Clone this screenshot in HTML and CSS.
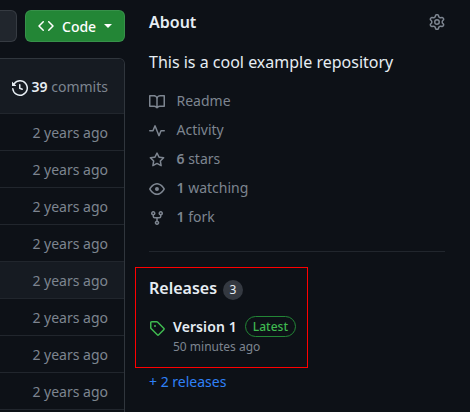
FILE: index.html
```html
<!DOCTYPE html>
<html lang="en">
<head>
<meta charset="utf-8">
<title>Repository</title>
<link rel="stylesheet" href="styles.css">
</head>
<body>
<div class="page">
  <main class="files">
    <div class="toolbar">
      <div class="btn btn-secondary"></div>
      <div class="btn btn-primary">
        <svg class="icon" viewBox="0 0 16 16"><path d="m11.28 3.22 4.25 4.25a.75.75 0 0 1 0 1.06l-4.25 4.25a.749.749 0 0 1-1.275-.326.749.749 0 0 1 .215-.734L13.94 8l-3.72-3.72a.749.749 0 0 1 .326-1.275.749.749 0 0 1 .734.215Zm-6.56 0a.751.751 0 0 1 1.042.018.751.751 0 0 1 .018 1.042L2.06 8l3.72 3.72a.749.749 0 0 1-.326 1.275.749.749 0 0 1-.734-.215L.47 8.53a.75.75 0 0 1 0-1.06Z"/></svg>
        <span>Code</span>
        <span class="caret"></span>
      </div>
    </div>
    <div class="table">
      <div class="table-head">
        <svg class="icon" viewBox="0 0 16 16"><path d="m.427 1.927 1.215 1.215a8.002 8.002 0 1 1-1.6 5.685.75.75 0 1 1 1.493-.154 6.5 6.5 0 1 0 1.18-4.458l1.358 1.358A.25.25 0 0 1 3.896 6H.25A.25.25 0 0 1 0 5.75V2.104a.25.25 0 0 1 .427-.177ZM7.75 4a.75.75 0 0 1 .75.75v2.992l2.028.812a.75.75 0 0 1-.557 1.392l-2.5-1A.751.751 0 0 1 7 8.25v-3.5A.75.75 0 0 1 7.75 4Z"/></svg>
        <span><strong>39</strong> commits</span>
      </div>
      <div class="row">2 years ago</div>
      <div class="row">2 years ago</div>
      <div class="row">2 years ago</div>
      <div class="row">2 years ago</div>
      <div class="row row-active">2 years ago</div>
      <div class="row">2 years ago</div>
      <div class="row">2 years ago</div>
      <div class="row">2 years ago</div>
      <div class="row"></div>
    </div>
  </main>
  <aside class="sidebar">
    <div class="about-head">
      <h2>About</h2>
      <svg class="icon" viewBox="0 0 16 16"><path d="M8 0a8.2 8.2 0 0 1 .701.031C9.444.095 9.99.645 10.16 1.29l.288 1.107c.018.066.079.158.212.224.231.114.454.243.668.386.123.082.233.09.299.071l1.103-.303c.644-.176 1.392.021 1.82.63.27.385.506.792.704 1.218.315.675.111 1.422-.364 1.891l-.814.806c-.049.048-.098.147-.088.294.016.257.016.515 0 .772-.01.147.038.246.088.294l.814.806c.475.469.679 1.216.364 1.891a7.977 7.977 0 0 1-.704 1.217c-.428.61-1.176.807-1.82.63l-1.102-.302c-.067-.019-.177-.011-.3.071a5.909 5.909 0 0 1-.668.386c-.133.066-.194.158-.211.224l-.29 1.106c-.168.646-.715 1.196-1.458 1.26a8.006 8.006 0 0 1-1.402 0c-.743-.064-1.289-.614-1.458-1.26l-.289-1.106c-.018-.066-.079-.158-.212-.224a5.738 5.738 0 0 1-.668-.386c-.123-.082-.233-.09-.299-.071l-1.103.303c-.644.176-1.392-.021-1.82-.63a8.12 8.12 0 0 1-.704-1.218c-.315-.675-.111-1.422.363-1.891l.815-.806c.05-.048.098-.147.088-.294a6.214 6.214 0 0 1 0-.772c.01-.147-.038-.246-.088-.294l-.815-.806C.635 6.045.431 5.298.746 4.623a7.92 7.92 0 0 1 .704-1.217c.428-.61 1.176-.807 1.82-.63l1.102.302c.067.019.177.011.3-.071.214-.143.437-.272.668-.386.133-.066.194-.158.211-.224l.29-1.106C6.009.645 6.556.095 7.299.03 7.53.01 7.764 0 8 0Zm-.571 1.525c-.036.003-.108.036-.137.146l-.289 1.105c-.147.561-.549.967-.998 1.189-.173.086-.34.183-.5.29-.417.278-.97.423-1.529.27l-1.103-.303c-.109-.03-.175.016-.195.045-.22.312-.412.644-.573.99-.014.031-.021.11.059.19l.815.806c.411.406.562.957.53 1.456a4.709 4.709 0 0 0 0 .582c.032.499-.119 1.05-.53 1.456l-.815.806c-.081.08-.073.159-.059.19.162.346.353.677.573.989.02.03.085.076.195.046l1.102-.303c.56-.153 1.113-.008 1.53.27.161.107.328.204.501.29.447.222.85.629.997 1.189l.289 1.105c.029.109.101.143.137.146a6.6 6.6 0 0 0 1.142 0c.036-.003.108-.036.137-.146l.289-1.105c.147-.561.549-.967.998-1.189.173-.086.34-.183.5-.29.417-.278.97-.423 1.529-.27l1.103.303c.109.029.175-.016.195-.045.22-.313.411-.644.573-.99.014-.031.021-.11-.059-.19l-.815-.806c-.411-.406-.562-.957-.53-1.456a4.709 4.709 0 0 0 0-.582c-.032-.499.119-1.05.53-1.456l.815-.806c.081-.08.073-.159.059-.19a6.464 6.464 0 0 0-.573-.989c-.02-.03-.085-.076-.195-.046l-1.102.303c-.56.153-1.113.008-1.53-.27a4.44 4.44 0 0 0-.501-.29c-.447-.222-.85-.629-.997-1.189l-.289-1.105c-.029-.11-.101-.143-.137-.146a6.6 6.6 0 0 0-1.142 0ZM11 8a3 3 0 1 1-6 0 3 3 0 0 1 6 0ZM9.5 8a1.5 1.5 0 1 0-3.001.001A1.5 1.5 0 0 0 9.5 8Z"/></svg>
    </div>
    <p class="description">This is a cool example repository</p>
    <ul class="stats">
      <li><svg class="icon" viewBox="0 0 16 16"><path d="M0 1.75A.75.75 0 0 1 .75 1h4.253c1.227 0 2.317.59 3 1.501A3.743 3.743 0 0 1 11.006 1h4.245a.75.75 0 0 1 .75.75v10.5a.75.75 0 0 1-.75.75h-4.507a2.25 2.25 0 0 0-1.591.659l-.622.621a.75.75 0 0 1-1.06 0l-.622-.621A2.25 2.25 0 0 0 5.258 13H.75a.75.75 0 0 1-.75-.75Zm7.251 10.324.004-5.073-.002-2.253A2.25 2.25 0 0 0 5.003 2.5H1.5v9h3.757a3.75 3.75 0 0 1 1.994.574ZM8.755 4.75l-.004 7.322a3.752 3.752 0 0 1 1.992-.572H14.5v-9h-3.495a2.25 2.25 0 0 0-2.25 2.25Z"/></svg><span>Readme</span></li>
      <li><svg class="icon" viewBox="0 0 16 16"><path d="M6 2c.306 0 .582.187.696.471L10 10.731l1.304-3.26A.751.751 0 0 1 12 7h3.25a.75.75 0 0 1 0 1.5h-2.742l-1.812 4.528a.751.751 0 0 1-1.392 0L6 4.77 4.696 8.03A.75.75 0 0 1 4 8.5H.75a.75.75 0 0 1 0-1.5h2.742l1.812-4.529A.751.751 0 0 1 6 2Z"/></svg><span>Activity</span></li>
      <li><svg class="icon" viewBox="0 0 16 16"><path d="M8 .25a.75.75 0 0 1 .673.418l1.882 3.815 4.21.612a.75.75 0 0 1 .416 1.279l-3.046 2.97.719 4.192a.751.751 0 0 1-1.088.791L8 12.347l-3.766 1.98a.75.75 0 0 1-1.088-.79l.72-4.194L.818 6.374a.75.75 0 0 1 .416-1.28l4.21-.611L7.327.668A.75.75 0 0 1 8 .25Zm0 2.445L6.615 5.5a.75.75 0 0 1-.564.41l-3.097.45 2.24 2.184a.75.75 0 0 1 .216.664l-.528 3.084 2.769-1.456a.75.75 0 0 1 .698 0l2.77 1.456-.53-3.084a.75.75 0 0 1 .216-.664l2.24-2.183-3.096-.45a.75.75 0 0 1-.564-.41L8 2.694Z"/></svg><span><strong>6</strong> stars</span></li>
      <li><svg class="icon" viewBox="0 0 16 16"><path d="M8 2c1.981 0 3.671.992 4.933 2.078 1.27 1.091 2.187 2.345 2.637 3.023a1.62 1.62 0 0 1 0 1.798c-.45.678-1.367 1.932-2.637 3.023C11.67 13.008 9.981 14 8 14c-1.981 0-3.671-.992-4.933-2.078C1.797 10.83.88 9.576.43 8.898a1.62 1.62 0 0 1 0-1.798c.45-.677 1.367-1.931 2.637-3.022C4.33 2.992 6.019 2 8 2ZM1.679 7.932a.12.12 0 0 0 0 .136c.411.622 1.241 1.75 2.366 2.717C5.176 11.758 6.527 12.5 8 12.5c1.473 0 2.825-.742 3.955-1.715 1.124-.967 1.954-2.096 2.366-2.717a.12.12 0 0 0 0-.136c-.412-.621-1.242-1.75-2.366-2.717C10.824 4.242 9.473 3.5 8 3.5c-1.473 0-2.825.742-3.955 1.715-1.124.967-1.954 2.096-2.366 2.717ZM8 10a2 2 0 1 1-.001-3.999A2 2 0 0 1 8 10Z"/></svg><span><strong>1</strong> watching</span></li>
      <li><svg class="icon" viewBox="0 0 16 16"><path d="M5 5.372v.878c0 .414.336.75.75.75h4.5a.75.75 0 0 0 .75-.75v-.878a2.25 2.25 0 1 1 1.5 0v.878a2.25 2.25 0 0 1-2.25 2.25h-1.5v2.128a2.251 2.251 0 1 1-1.5 0V8.5h-1.5A2.25 2.25 0 0 1 3.5 6.25v-.878a2.25 2.25 0 1 1 1.5 0ZM5 3.25a.75.75 0 1 0-1.5 0 .75.75 0 0 0 1.5 0Zm6.75.75a.75.75 0 1 0 0-1.5.75.75 0 0 0 0 1.5Zm-3 8.75a.75.75 0 1 0-1.5 0 .75.75 0 0 0 1.5 0Z"/></svg><span><strong>1</strong> fork</span></li>
    </ul>
    <section class="releases">
      <div class="releases-head">
        <h2>Releases</h2>
        <span class="counter">3</span>
      </div>
      <div class="release">
        <svg class="icon icon-tag" viewBox="0 0 16 16"><path d="M1 7.775V2.75C1 1.784 1.784 1 2.75 1h5.025c.464 0 .91.184 1.238.513l6.25 6.25a1.75 1.75 0 0 1 0 2.474l-5.026 5.026a1.75 1.75 0 0 1-2.474 0l-6.25-6.25A1.752 1.752 0 0 1 1 7.775Zm1.5 0c0 .066.026.13.073.177l6.25 6.25a.25.25 0 0 0 .354 0l5.025-5.025a.25.25 0 0 0 0-.354l-6.25-6.25a.25.25 0 0 0-.177-.073H2.75a.25.25 0 0 0-.25.25ZM6 5a1 1 0 1 1 0 2 1 1 0 0 1 0-2Z"/></svg>
        <div>
          <div class="release-title"><strong>Version 1</strong><span class="label">Latest</span></div>
          <div class="release-time">50 minutes ago</div>
        </div>
      </div>
    </section>
    <a class="more">+ 2 releases</a>
  </aside>
</div>
</body>
</html>
```
FILE: styles.css
```css
* {
  box-sizing: border-box;
}

body {
  margin: 0;
  background: #0d1117;
  color: #e6edf3;
  font: 14px/21px "Noto Sans", sans-serif;
  overflow: hidden;
}

h2, p, ul {
  margin: 0;
  padding: 0;
}

strong {
  font-weight: 600;
}

.icon {
  display: block;
  flex: none;
  width: 16px;
  height: 16px;
  fill: currentColor;
}

.page {
  display: flex;
  gap: 24px;
  height: 412px;
  overflow: hidden;
}

.files {
  flex: none;
  width: 125px;
  padding-top: 10px;
}

.toolbar {
  display: flex;
  gap: 8px;
  margin-bottom: 16px;
}

.btn {
  height: 32px;
  border: 1px solid rgba(240, 246, 252, 0.1);
  border-radius: 6px;
}

.btn-secondary {
  width: 17px;
  border-left: 0;
  border-radius: 0 6px 6px 0;
  background: #21262d;
}

.btn-primary {
  display: flex;
  flex: 1;
  align-items: center;
  gap: 8px;
  padding-left: 12px;
  background: #238636;
  color: #fff;
  font-weight: 500;
}

.caret {
  border: 4px solid transparent;
  border-top-color: currentColor;
  border-bottom: 0;
}

.table {
  border: 1px solid #30363d;
  border-left: 0;
  border-radius: 0 6px 0 0;
  overflow: hidden;
}

.table-head,
.row {
  display: flex;
  align-items: center;
  justify-content: flex-end;
  padding-right: 16px;
  border-bottom: 1px solid #21262d;
  color: #7d8590;
  white-space: nowrap;
}

.table-head {
  gap: 4px;
  height: 55px;
  background: #161b22;
}

.table-head .icon,
.table-head strong {
  color: #e6edf3;
}

.table-head .icon {
  margin-top: 3px;
}

.row {
  height: 37px;
}

.row-active {
  background: #161b22;
}

.sidebar {
  width: 296px;
  padding-top: 10px;
}

h2 {
  font-size: 16px;
  line-height: 24px;
  font-weight: 600;
}

.about-head {
  display: flex;
  align-items: center;
  justify-content: space-between;
  color: #7d8590;
}

.about-head h2 {
  color: #e6edf3;
}

.description {
  margin-top: 16px;
  font-size: 16px;
  line-height: 24px;
}

.stats {
  display: grid;
  gap: 8px;
  padding: 16px 0 24px;
  border-bottom: 1px solid #21262d;
  color: #7d8590;
  list-style: none;
}

.stats li {
  display: flex;
  align-items: center;
  gap: 11.5px;
}

.stats .icon {
  margin-top: 3px;
}

.releases {
  width: 173px;
  height: 101px;
  margin: 15px 0 3px -14px;
  padding: 8px 0 0 13px;
  border: 1px solid #f00;
}

.releases-head {
  display: flex;
  align-items: center;
  gap: 6px;
}

.counter {
  width: 20px;
  height: 20px;
  margin-top: 3px;
  border-radius: 50%;
  background: #343941;
  font-size: 12px;
  line-height: 19px;
  text-align: center;
}

.release {
  display: flex;
  gap: 8px;
  margin-top: 16px;
}

.icon-tag {
  margin-top: 4px;
  color: #3fb950;
}

.release-title {
  display: flex;
  align-items: center;
  gap: 8px;
}

.release-title strong {
  letter-spacing: 0.1px;
}

.label {
  height: 21px;
  padding: 0 7px;
  border: 1px solid #238636;
  border-radius: 11px;
  color: #3fb950;
  font-size: 12px;
  font-weight: 500;
  line-height: 19px;
}

.release-time {
  margin-top: 1px;
  color: #7d8590;
  font-size: 12px;
  line-height: 18px;
}

.more {
  color: #2f81f7;
}
```
